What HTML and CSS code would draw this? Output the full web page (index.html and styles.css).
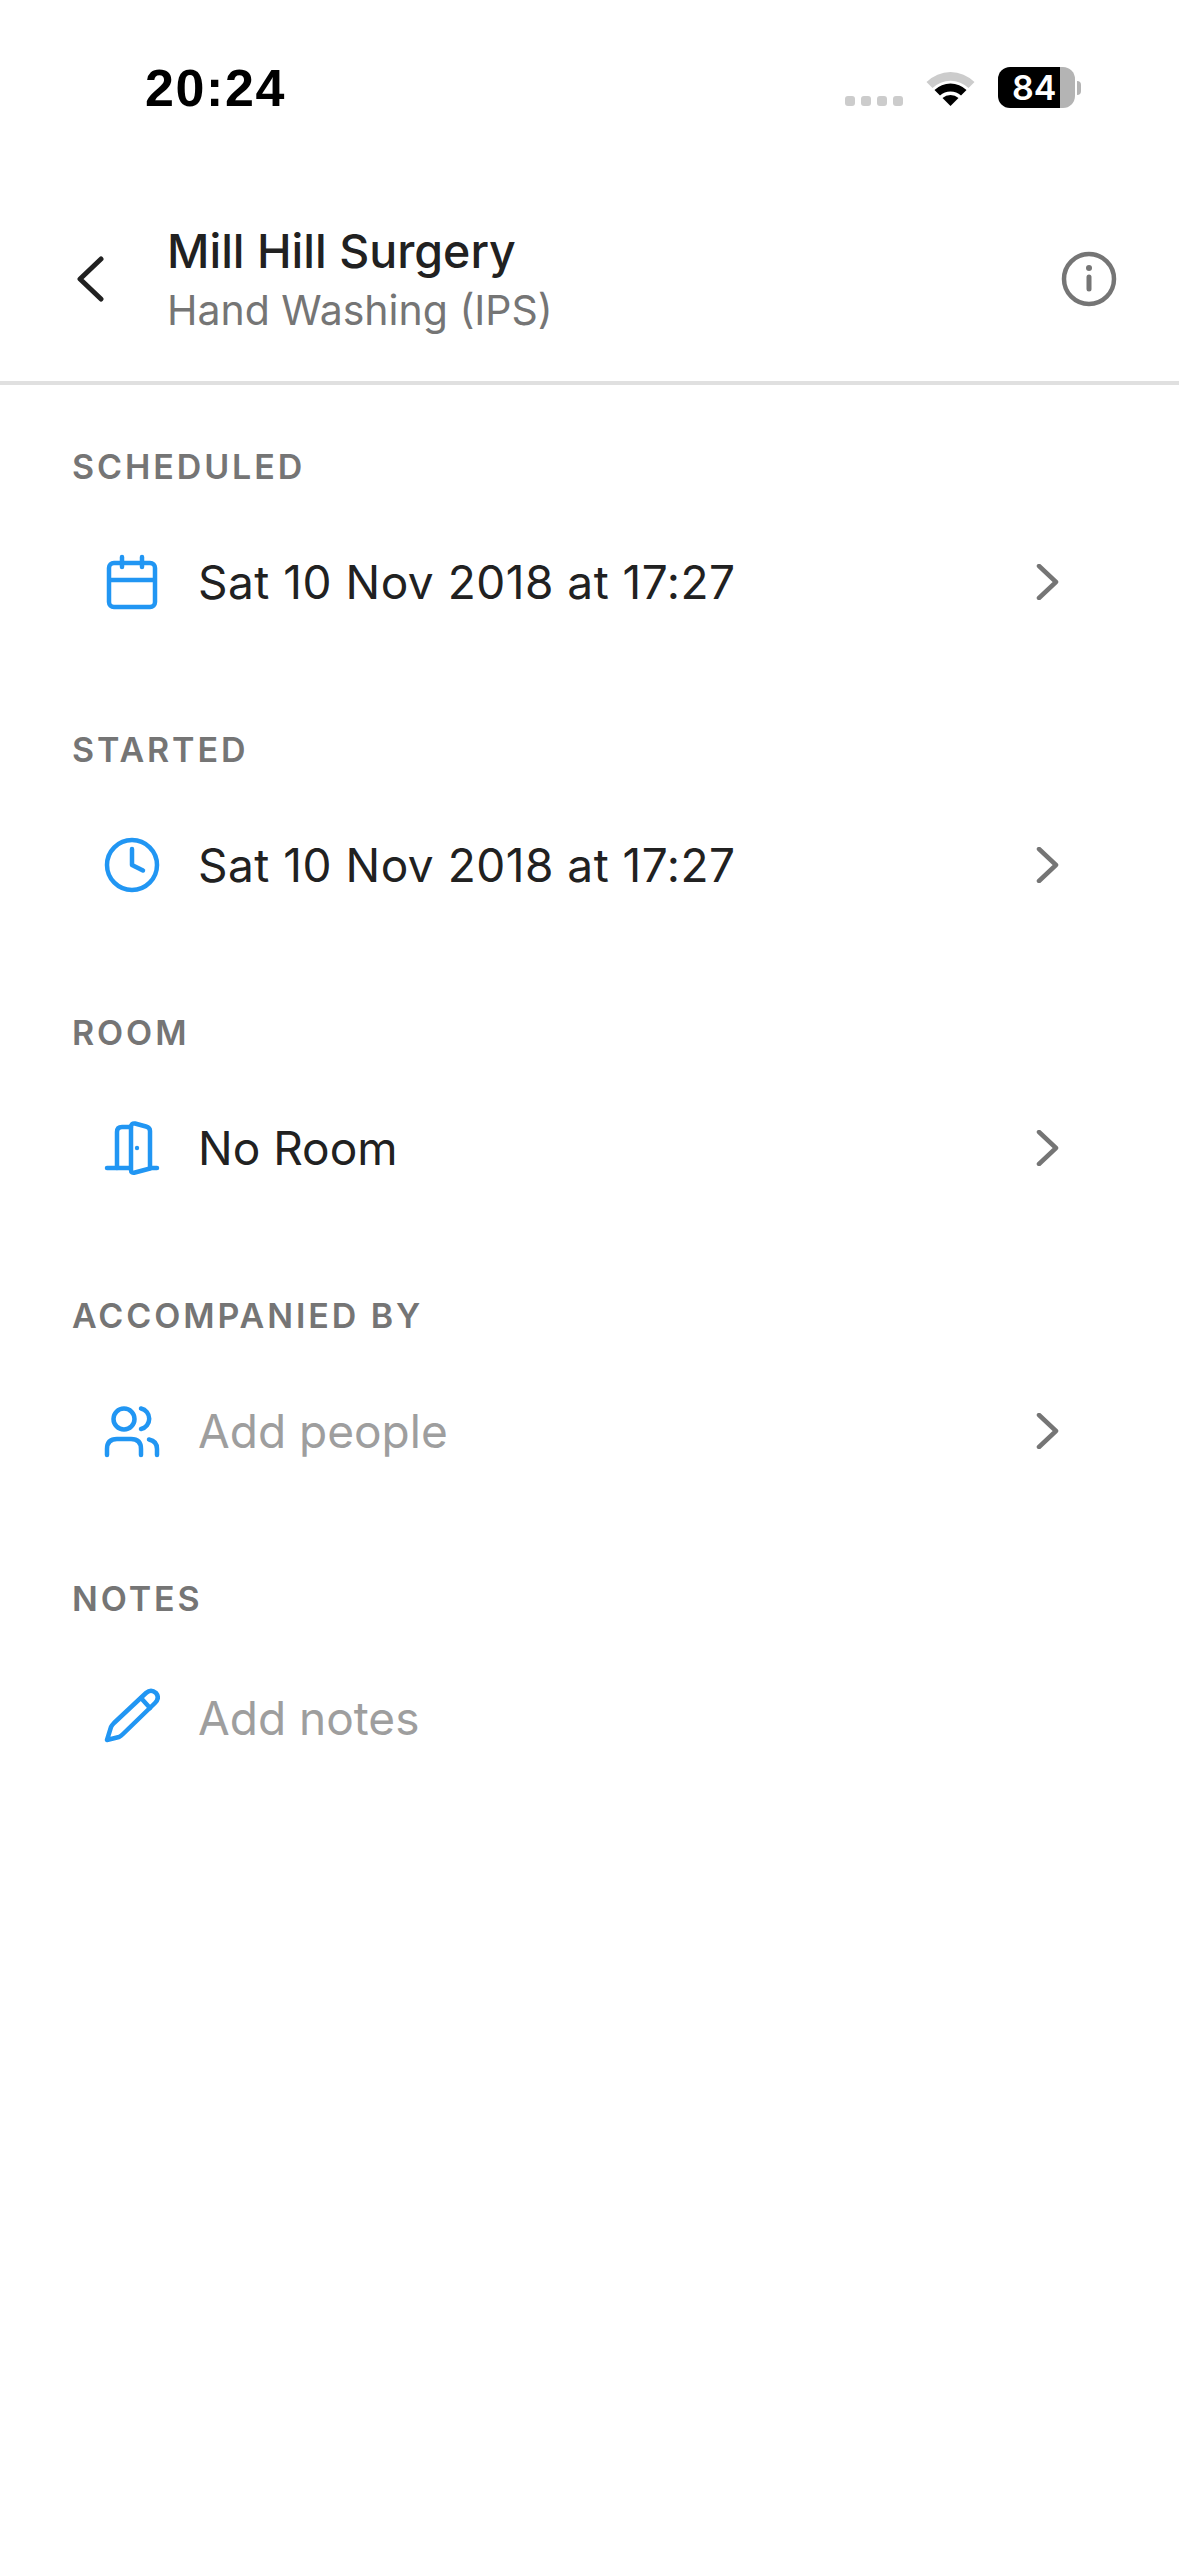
FILE: index.html
```html
<!DOCTYPE html>
<html>
<head>
  <meta charset="UTF-8" />
  <title>Mill Hill Surgery</title>
  <link rel="stylesheet" href="styles.css">
</head>
<body>
  <div class="status-bar">
    <div class="time">20:24</div>
    <div class="status-icons">
      <div class="signal"><span></span><span></span><span></span><span></span></div>
      <svg class="wifi" width="51" height="38" viewBox="0 0 50 38">
        <path d="M1 14 A34 34 0 0 1 49 14 L43 20 A26 26 0 0 0 7 20 Z" fill="#cccccc"/>
        <path d="M9 22 A23 23 0 0 1 41 22 L35.500 27.500 A15.500 15.500 0 0 0 14.500 27.500 Z" fill="#000"/>
        <path d="M17 30 A12 12 0 0 1 33 30 L25 38 Z" fill="#000"/>
      </svg>
      <div class="battery">
        <div class="battery-body"><span class="battery-level">84</span></div>
        <div class="battery-cap"></div>
      </div>
    </div>
  </div>

  <header class="top-bar">
    <svg class="back" width="28" height="46" viewBox="0 0 28 46">
      <path d="M25 3 L4 23 L25 43" fill="none" stroke="#212121" stroke-width="5" stroke-linecap="round" stroke-linejoin="round"/>
    </svg>
    <div class="title-block">
      <div class="title">Mill Hill Surgery</div>
      <div class="subtitle">Hand Washing (IPS)</div>
    </div>
    <svg class="info" width="56" height="56" viewBox="0 0 56 56">
      <circle cx="28" cy="28" r="25" fill="none" stroke="#757575" stroke-width="4.500"/>
      <circle cx="28" cy="17" r="3" fill="#757575"/>
      <path d="M28 26 V38" stroke="#757575" stroke-width="5" stroke-linecap="round"/>
    </svg>
  </header>

  <main class="content">
    <section class="group">
      <h2 class="label">SCHEDULED</h2>
      <div class="row">
        <svg class="icon" width="56" height="56" viewBox="0 0 56 56" fill="none" stroke="#2196f3" stroke-width="4.500" stroke-linecap="round" stroke-linejoin="round">
          <rect x="5" y="9" width="46" height="44" rx="5"/>
          <path d="M5 26 H51" stroke-linecap="butt"/>
          <path d="M18 3 V13 M38 3 V13"/>
        </svg>
        <span class="value date">Sat 10 Nov 2018 at 17:27</span>
        <svg class="chevron" width="24" height="36" viewBox="0 0 24 36"><path d="M3 2 L20 18 L3 34" fill="none" stroke="#757575" stroke-width="4.500" stroke-linecap="round" stroke-linejoin="round"/></svg>
      </div>
    </section>

    <section class="group">
      <h2 class="label">STARTED</h2>
      <div class="row">
        <svg class="icon" width="56" height="56" viewBox="0 0 56 56" fill="none" stroke="#2196f3" stroke-width="4.500" stroke-linecap="round" stroke-linejoin="round">
          <circle cx="28" cy="28" r="25"/>
          <path d="M28 12 V28 L39 33.500"/>
        </svg>
        <span class="value date">Sat 10 Nov 2018 at 17:27</span>
        <svg class="chevron" width="24" height="36" viewBox="0 0 24 36"><path d="M3 2 L20 18 L3 34" fill="none" stroke="#757575" stroke-width="4.500" stroke-linecap="round" stroke-linejoin="round"/></svg>
      </div>
    </section>

    <section class="group">
      <h2 class="label">ROOM</h2>
      <div class="row">
        <svg class="icon" width="56" height="56" viewBox="0 0 56 56" fill="none" stroke="#2196f3" stroke-width="4.500" stroke-linecap="round" stroke-linejoin="round">
          <path d="M3 48 H26 M46 48 H53"/>
          <path d="M13 48 V12 Q13 7 18 7 H27"/>
          <path d="M46 48.500 V11 Q46 7.500 42 6.500 L31 3.500 Q27 3 27 7 V50 Q27 53.500 31 52.500 L46 48.500"/>
          <circle cx="33" cy="28" r="2.200" fill="#2196f3" stroke="none"/>
        </svg>
        <span class="value">No Room</span>
        <svg class="chevron" width="24" height="36" viewBox="0 0 24 36"><path d="M3 2 L20 18 L3 34" fill="none" stroke="#757575" stroke-width="4.500" stroke-linecap="round" stroke-linejoin="round"/></svg>
      </div>
    </section>

    <section class="group">
      <h2 class="label">ACCOMPANIED BY</h2>
      <div class="row">
        <svg class="icon" width="56" height="56" viewBox="0 0 56 56" fill="none" stroke="#2196f3" stroke-width="4.500" stroke-linecap="round" stroke-linejoin="round">
          <circle cx="20" cy="16" r="10.500"/>
          <path d="M3 52 V46 Q3 36 13 36 H27 Q37 36 37 46 V52"/>
          <path d="M37 5.500 A10.500 10.500 0 0 1 37 26"/>
          <path d="M45 36.500 Q53 38 53 46 V52"/>
        </svg>
        <span class="value muted">Add people</span>
        <svg class="chevron" width="24" height="36" viewBox="0 0 24 36"><path d="M3 2 L20 18 L3 34" fill="none" stroke="#757575" stroke-width="4.500" stroke-linecap="round" stroke-linejoin="round"/></svg>
      </div>
    </section>

    <section class="group">
      <h2 class="label">NOTES</h2>
      <div class="row notes-row">
        <svg class="icon" width="56" height="56" viewBox="0 0 56 56" fill="none" stroke="#2196f3" stroke-width="4.500" stroke-linecap="round" stroke-linejoin="round">
          <path d="M3 53 L7 40 Q8 38 10 36 L42 6 Q47 1.500 52 6 Q56 11 51 16 L19 47 Q17 49 15 50 Z"/>
          <path d="M37 11 L46 21"/>
        </svg>
        <span class="value muted">Add notes</span>
      </div>
    </section>
  </main>
</body>
</html>
```
FILE: styles.css
```css
body {
  font-family: Inter, 'Liberation Sans', sans-serif;
  margin: 0;
  padding: 0;
  min-height: 100vh;
  background: #fff;
  color: #212121;
}
.status-bar {
  height: 130px;
  padding: 0 98px 0 145px;
  box-sizing: border-box;
  display: flex;
  justify-content: space-between;
  align-items: flex-start;
}
.time {
  margin-top: 60px;
  font-family: 'Liberation Sans', sans-serif;
  font-size: 52px;
  line-height: 56px;
  font-weight: 700;
  letter-spacing: 1.6px;
  color: #000;
}
.status-icons {
  display: flex;
  align-items: flex-start;
  margin-top: 68px;
}
.signal {
  display: flex;
  gap: 6px;
  margin-top: 28px;
  margin-right: 22px;
}
.signal span {
  width: 10px;
  height: 10px;
  border-radius: 3px;
  background: #ccc;
}
.wifi {
  margin-right: 22px;
}
.battery {
  display: flex;
  align-items: center;
  margin-top: -1px;
}
.battery-body {
  width: 77px;
  height: 41px;
  border-radius: 12px;
  background: linear-gradient(90deg, #000 0, #000 81%, #b4b4b4 81%);
  display: flex;
  align-items: center;
  padding-left: 14px;
  box-sizing: border-box;
}
.battery-level {
  color: #fff;
  font-size: 34px;
  font-weight: 600;
  line-height: 41px;
}
.battery-cap {
  width: 4px;
  height: 14px;
  margin-left: 2px;
  border-radius: 0 7px 7px 0;
  background: #b4b4b4;
}
.top-bar {
  height: 255px;
  box-sizing: border-box;
  border-bottom: 4px solid #e0e0e0;
  padding: 46px 62px 0 76px;
  display: flex;
  align-items: center;
}
.back {
  margin-right: 63px;
}
.title-block {
  flex: 1;
  margin-top: 4px;
}
.title {
  font-size: 46.500px;
  line-height: 60px;
  font-weight: 500;
  color: #212121;
}
.subtitle {
  font-size: 41px;
  line-height: 59px;
  color: #757575;
}
.content {
  padding: 0 72px;
}
.group {
  height: 283px;
  padding-top: 60px;
  box-sizing: border-box;
}
.label {
  margin: 0;
  font-size: 34px;
  line-height: 44px;
  font-weight: 600;
  letter-spacing: 2.900px;
  color: #757575;
}
.row {
  display: flex;
  align-items: center;
  height: 100px;
  margin-top: 43px;
  padding-left: 32px;
  padding-right: 47px;
}
.notes-row {
  margin-top: 44px;
}
.notes-row .value {
  margin-top: 6px;
}
.icon {
  flex: none;
  margin-right: 38px;
}
.value {
  flex: 1;
  font-size: 46px;
  line-height: 60px;
  color: #212121;
}
.date {
  letter-spacing: 0.500px;
}
.muted {
  color: #9e9e9e;
}
.chevron {
  flex: none;
}
```
